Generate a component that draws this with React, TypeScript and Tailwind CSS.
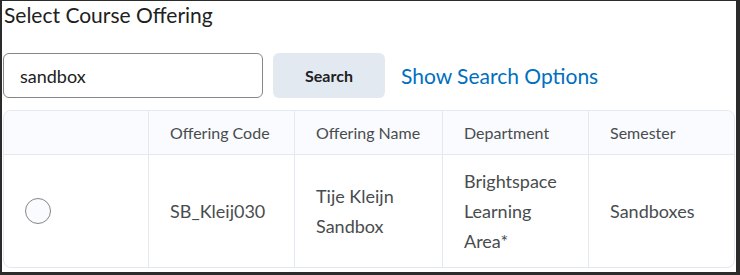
export default function App() {
  const font = { fontFamily: 'Lato, "Noto Sans", sans-serif' };
  return (
    <div
      className="w-[740px] h-[275px] bg-white border-t border-l-2 border-r-4 border-b-[3px] border-[#2b2b2b] overflow-hidden text-[#202122]"
      style={font}
    >
      <h1 className="pl-[2px] pt-[1px] text-[21px] leading-[26px] font-normal">Select Course Offering</h1>

      <div className="mt-[25px] flex items-center">
        <input
          readOnly
          value="sandbox"
          className="ml-[1px] w-[260px] h-[45px] rounded-[6px] border border-[#868686] pl-[16px] text-[18px] text-[#202122] outline-none"
        />
        <button className="ml-[10px] w-[112px] h-[45px] rounded-[6px] bg-[#e3e9f1] text-[16px] font-bold text-[#202122]">
          Search
        </button>
        <span className="ml-[16px] text-[21px] text-[#006fbf]">Show Search Options</span>
      </div>

      <div className="mt-[12px] ml-[1px] mr-[1px] rounded-[8px] border border-[#e3e9f1] overflow-hidden">
        <div className="grid grid-cols-[144px_146px_148px_146px_1fr] bg-[#f9fbff] border-b border-[#e3e9f1] h-[44px] text-[16px] text-[#494c4e]">
          <div />
          <div className="border-l border-[#e3e9f1] pl-[21px] flex items-center">Offering Code</div>
          <div className="border-l border-[#e3e9f1] pl-[21px] flex items-center">Offering Name</div>
          <div className="border-l border-[#e3e9f1] pl-[21px] flex items-center">Department</div>
          <div className="border-l border-[#e3e9f1] pl-[21px] flex items-center">Semester</div>
        </div>
        <div className="grid grid-cols-[144px_146px_148px_146px_1fr] h-[112px] text-[18px] leading-[30px] text-[#494c4e]">
          <div className="flex items-center pl-[21px]">
            <span className="w-[26px] h-[26px] rounded-full border border-[#868686] bg-[#f9fbff]" />
          </div>
          <div className="border-l border-[#e3e9f1] pl-[21px] flex items-center">SB_Kleij030</div>
          <div className="border-l border-[#e3e9f1] pl-[21px] flex items-center">
            <span>
              Tije Kleijn
              <br />
              Sandbox
            </span>
          </div>
          <div className="border-l border-[#e3e9f1] pl-[21px] flex items-center">
            <span>
              Brightspace
              <br />
              Learning
              <br />
              Area*
            </span>
          </div>
          <div className="border-l border-[#e3e9f1] pl-[21px] flex items-center">Sandboxes</div>
        </div>
      </div>
    </div>
  );
}
